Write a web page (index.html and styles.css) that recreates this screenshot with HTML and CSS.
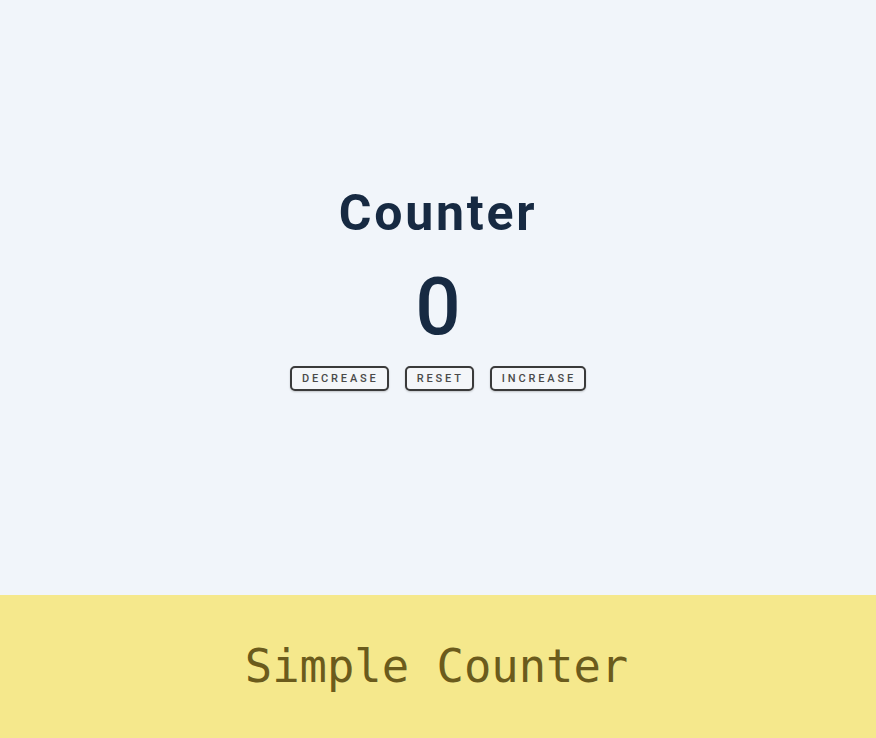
FILE: index.html
```html
<!DOCTYPE html>
<html>
<head>
<meta charset="utf-8">
<link rel="stylesheet" href="styles.css">
</head>
<body>
<div class="page">
  <main class="main">
    <h1 class="title">Counter</h1>
    <div class="count">0</div>
    <div class="buttons">
      <button class="btn">Decrease</button>
      <button class="btn">Reset</button>
      <button class="btn">Increase</button>
    </div>
  </main>
  <footer class="footer">Simple Counter</footer>
</div>
</body>
</html>
```
FILE: styles.css
```css
html, body { margin: 0; padding: 0; }
body { background: #f1f5fa; font-family: Roboto, "Noto Sans", sans-serif; }
.page { display: flex; flex-direction: column; height: 738px; }
.main {
  flex: 1;
  display: flex; flex-direction: column; align-items: center; justify-content: center;
  padding-bottom: 22px;
}
.title {
  margin: 0;
  font-size: 50px; font-weight: 700; letter-spacing: 0.055em;
  color: #172a42; line-height: 60px;
}
.count {
  margin-top: 24px;
  font-size: 80px; font-weight: 500; color: #172a42; line-height: 80px;
}
.buttons { display: flex; gap: 16px; margin-top: 19px; }
.btn {
  font-family: Roboto, sans-serif; font-size: 11px; font-weight: 500;
  text-transform: uppercase; letter-spacing: 0.26em;
  color: #4a4a4a; background: #f4f6f9;
  border: 2px solid #3a3a3a; border-radius: 5px;
  height: 25px; padding: 0 8px 0 10px;
  box-shadow: 0 1px 2px rgba(0,0,0,0.2);
}
.footer {
  height: 143px; background: #f5e88c; color: #6b5b1c;
  font-family: "DejaVu Sans Mono", monospace; font-size: 45.5px;
  display: flex; align-items: center; justify-content: center;
  padding-right: 3px;
}
```
